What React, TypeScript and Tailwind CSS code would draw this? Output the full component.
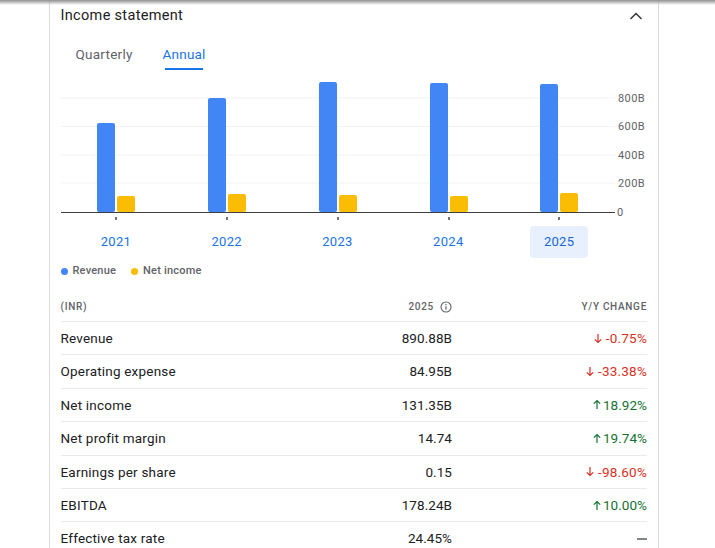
import { ChevronUp } from "lucide-react";

const years = ["2021", "2022", "2023", "2024", "2025"];
const bars = [
  { x: 36, rev: 123, net: 196 },
  { x: 147, rev: 98, net: 194 },
  { x: 258, rev: 82, net: 195 },
  { x: 369, rev: 83, net: 196 },
  { x: 479, rev: 84, net: 193 },
];
const grid = [
  { y: 98, label: "800B" },
  { y: 126.5, label: "600B" },
  { y: 155, label: "400B" },
  { y: 183, label: "200B" },
];
const rows = [
  { name: "Revenue", value: "890.88B", change: "-0.75%", dir: "down" },
  { name: "Operating expense", value: "84.95B", change: "-33.38%", dir: "down" },
  { name: "Net income", value: "131.35B", change: "18.92%", dir: "up" },
  { name: "Net profit margin", value: "14.74", change: "19.74%", dir: "up" },
  { name: "Earnings per share", value: "0.15", change: "-98.60%", dir: "down" },
  { name: "EBITDA", value: "178.24B", change: "10.00%", dir: "up" },
  { name: "Effective tax rate", value: "24.45%", change: "", dir: "none" },
];

const TOP = 76;

function Chart() {
  return (
    <svg width="586" height="146" viewBox="0 0 586 146" className="block">
      {grid.map((g) => (
        <g key={g.label}>
          <line x1="0" x2="554" y1={g.y - TOP} y2={g.y - TOP} stroke="#f1f3f4" strokeWidth="1" />
          <text x="584" y={g.y - TOP + 3.5} textAnchor="end" fontSize="11" letterSpacing="0.4" fill="#5f6368">
            {g.label}
          </text>
        </g>
      ))}
      {bars.map((b) => (
        <g key={b.x}>
          <rect x={b.x} y={b.rev - TOP} width="18" height={212 - b.rev} rx="2" fill="#4285f4" />
          <rect x={b.x + 20} y={b.net - TOP} width="18" height={212 - b.net} rx="2" fill="#fbbc04" />
          <rect x={b.x + 18} y={217 - TOP} width="2" height="3" fill="#70757a" />
        </g>
      ))}
      <rect x="0" y={212 - TOP} width="554" height="1" fill="#3c4043" />
      <text x="556" y={212 - TOP + 4} fontSize="11" fill="#5f6368">
        0
      </text>
    </svg>
  );
}

function Arrow({ dir }: { dir: string }) {
  const d = dir === "up" ? "M5 10V1.5M1.8 4.7 5 1.5l3.2 3.2" : "M5 1v8.5M1.8 6.3 5 9.5l3.2-3.2";
  return (
    <svg width="10" height="11" viewBox="0 0 10 11" fill="none" stroke="currentColor" strokeWidth="1.2">
      <path d={d} />
    </svg>
  );
}

export default function App() {
  return (
    <div className="relative h-[548px] w-[715px] overflow-hidden bg-white font-['Roboto',sans-serif]">
      <div className="absolute inset-x-0 top-0 h-[5px] bg-gradient-to-b from-[#8f8f8f] to-transparent" />
      <div className="ml-[49px] w-[610px] h-full border-x border-[#dadce0] pl-[10.5px] pr-[11px] pt-[7px]">
        <div className="flex items-center justify-between h-[18px]">
          <h2 className="text-[14.5px] leading-[18px] tracking-[0.32px] text-[#202124]">Income statement</h2>
          <ChevronUp className="w-[20px] h-[20px] mr-[1px] text-[#3c4043]" strokeWidth={2} />
        </div>

        <div className="flex mt-[13px] ml-[15px] gap-[30px] text-[13.5px] leading-[16px]">
          <div className="text-[#5f6368] tracking-[0.25px] pt-[8px]">Quarterly</div>
          <div className="pt-[8px]">
            <div className="text-[#1a73e8] tracking-[0.2px]">Annual</div>
            <div className="mt-[6px] h-[2px] w-[38px] mx-auto bg-[#1a73e8]" />
          </div>
        </div>

        <div className="mt-[6px]">
          <Chart />
        </div>

        <div className="grid grid-cols-5 w-[554px] mt-[4px]">
          {years.map((y) => (
            <div key={y} className="flex justify-center">
              <div
                className={
                  y === "2025"
                    ? "w-[58px] h-[32px] flex items-center justify-center rounded bg-[#e8f0fe] text-[13px] tracking-[0.3px] text-[#1967d2]"
                    : "w-[58px] h-[32px] flex items-center justify-center text-[13px] tracking-[0.3px] text-[#1a73e8]"
                }
              >
                {y}
              </div>
            </div>
          ))}
        </div>

        <div className="flex items-center mt-[5px] h-[16px] text-[11px] font-medium tracking-[0.2px] text-[#5f6368]">
          <span className="w-[7px] h-[7px] rounded-full bg-[#4285f4] mr-[5px]" />
          <span>Revenue</span>
          <span className="w-[7px] h-[7px] rounded-full bg-[#fbbc04] ml-[15px] mr-[5px]" />
          <span>Net income</span>
        </div>

        <div className="flex items-center h-[30px] mt-[13px] border-b border-[#e8eaed] text-[#5f6368] text-[10px] font-medium tracking-[0.7px]">
          <div className="flex-1">(INR)</div>
          <div className="w-[120px] flex items-center justify-end gap-[6px]">
            2025
            <svg width="12" height="12" viewBox="0 0 12 12" fill="none" stroke="currentColor">
              <circle cx="6" cy="6" r="5" strokeWidth="1.1" />
              <path d="M6 5.2v3.6M6 3v1.2" strokeWidth="1.2" />
            </svg>
          </div>
          <div className="w-[195px] text-right">Y/Y CHANGE</div>
        </div>

        {rows.map((r) => (
          <div key={r.name} className="flex items-center h-[33.4px] border-b border-[#e8eaed] text-[13.5px] tracking-[0.2px] text-[#202124]">
            <div className="flex-1">{r.name}</div>
            <div className="w-[120px] text-right tracking-[0.05px]">{r.value}</div>
            <div
              className={
                r.dir === "up"
                  ? "w-[195px] flex items-center justify-end gap-[1px] tracking-[0.05px] text-[#137333]"
                  : r.dir === "down"
                    ? "w-[195px] flex items-center justify-end gap-[3px] text-[#d93025]"
                    : "w-[195px] flex items-center justify-end"
              }
            >
              {r.dir === "none" ? <span className="w-[10px] h-[2px] bg-[#80868b]" /> : <Arrow dir={r.dir} />}
              {r.change}
            </div>
          </div>
        ))}
      </div>
    </div>
  );
}
